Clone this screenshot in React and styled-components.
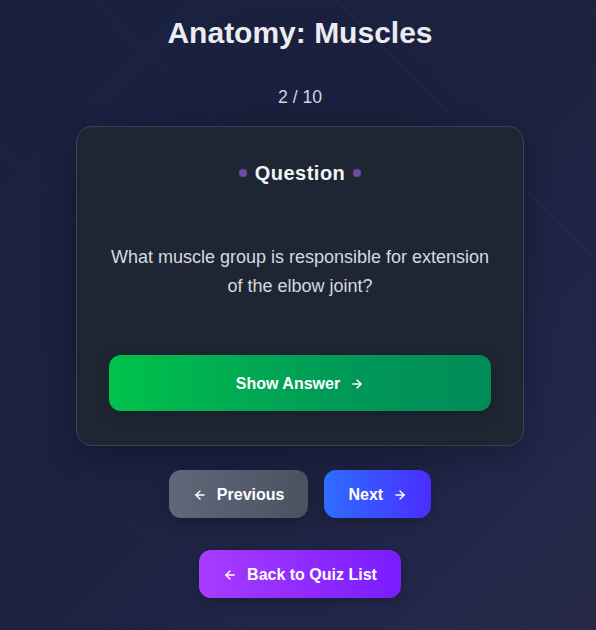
import React from "react";
import styled, { createGlobalStyle } from "styled-components";
import { ArrowRight, ArrowLeft } from "lucide-react";

const GlobalStyle = createGlobalStyle`
  * { box-sizing: border-box; }
  html, body { margin: 0; padding: 0; }
  body {
    font-family: "Liberation Sans", Arial, sans-serif;
    background: #1b2140;
  }
`;

const Page = styled.div`
  min-height: 100vh;
  padding: 15px 16px 32px 20px;
  display: flex;
  flex-direction: column;
  align-items: center;
  background:
    repeating-linear-gradient(
      45deg,
      transparent 0px,
      transparent 170px,
      rgba(255, 255, 255, 0.022) 170px,
      rgba(255, 255, 255, 0.022) 171px
    ),
    radial-gradient(ellipse at 50% 45%, rgba(15, 18, 35, 0.35) 0%, rgba(15, 18, 35, 0) 60%),
    linear-gradient(135deg, #1a2040 0%, #1b2140 45%, #22274a 80%, #272847 100%);
`;

const Title = styled.h1`
  margin: 0 0 36px;
  font-size: 30px;
  line-height: 36px;
  font-weight: 700;
  color: #ececf0;
  text-align: center;
`;

const Counter = styled.div`
  font-size: 17.6px;
  line-height: 20px;
  color: #d0d4db;
  margin-bottom: 19px;
`;

const Card = styled.div`
  width: 448px;
  background: #1f2633;
  border: 1px solid #394153;
  border-radius: 16px;
  padding: 32px 32px 34px;
  display: flex;
  flex-direction: column;
  align-items: center;
  box-shadow: 0 10px 30px rgba(5, 8, 20, 0.3);
`;

const Label = styled.div`
  display: flex;
  align-items: center;
  gap: 8px;
  height: 28px;
  font-size: 20px;
  font-weight: 700;
  letter-spacing: 0.5px;
  color: #f3f4f6;
`;

const Dot = styled.span`
  width: 8px;
  height: 8px;
  border-radius: 50%;
  background: #6d4aa6;
`;

const Body = styled.div`
  min-height: 168px;
  padding-top: 2px;
  display: flex;
  align-items: center;
  justify-content: center;
  text-align: center;
  font-size: 18px;
  line-height: 29px;
  color: #d6d9df;
`;

const Button = styled.button`
  display: inline-flex;
  align-items: center;
  justify-content: center;
  gap: 10px;
  height: ${(p) => (p.$tall ? "56px" : "48px")};
  width: ${(p) => (p.$full ? "100%" : "auto")};
  padding: 2px 24px 0;
  border: none;
  border-radius: 12px;
  font-family: inherit;
  font-size: 16px;
  font-weight: 700;
  color: #ffffff;
  cursor: pointer;
  background: ${(p) => p.$bg};
  box-shadow: 0 4px 14px rgba(0, 0, 0, 0.22);
`;

const NavRow = styled.div`
  display: flex;
  gap: 16px;
  margin-top: 24px;
`;

const BackRow = styled.div`
  margin-top: 32px;
`;

export default function App() {
  return (
    <>
      <GlobalStyle />
      <Page>
        <Title>Anatomy: Muscles</Title>
        <Counter>2 / 10</Counter>
        <Card>
          <Label>
            <Dot />
            Question
            <Dot />
          </Label>
          <Body>What muscle group is responsible for extension of the elbow joint?</Body>
          <Button $tall $full $bg="linear-gradient(90deg, #00c24b 0%, #009a58 60%, #008b57 100%)">
            Show Answer
            <ArrowRight size={14} strokeWidth={2.5} />
          </Button>
        </Card>
        <NavRow>
          <Button $bg="linear-gradient(90deg, #5f6879 0%, #4a5262 100%)">
            <ArrowLeft size={14} strokeWidth={2.5} />
            Previous
          </Button>
          <Button $bg="linear-gradient(90deg, #2d6dff 0%, #4a2eff 100%)">
            Next
            <ArrowRight size={14} strokeWidth={2.5} />
          </Button>
        </NavRow>
        <BackRow>
          <Button $bg="linear-gradient(90deg, #a83cff 0%, #7a1cff 100%)">
            <ArrowLeft size={14} strokeWidth={2.5} />
            Back to Quiz List
          </Button>
        </BackRow>
      </Page>
    </>
  );
}
